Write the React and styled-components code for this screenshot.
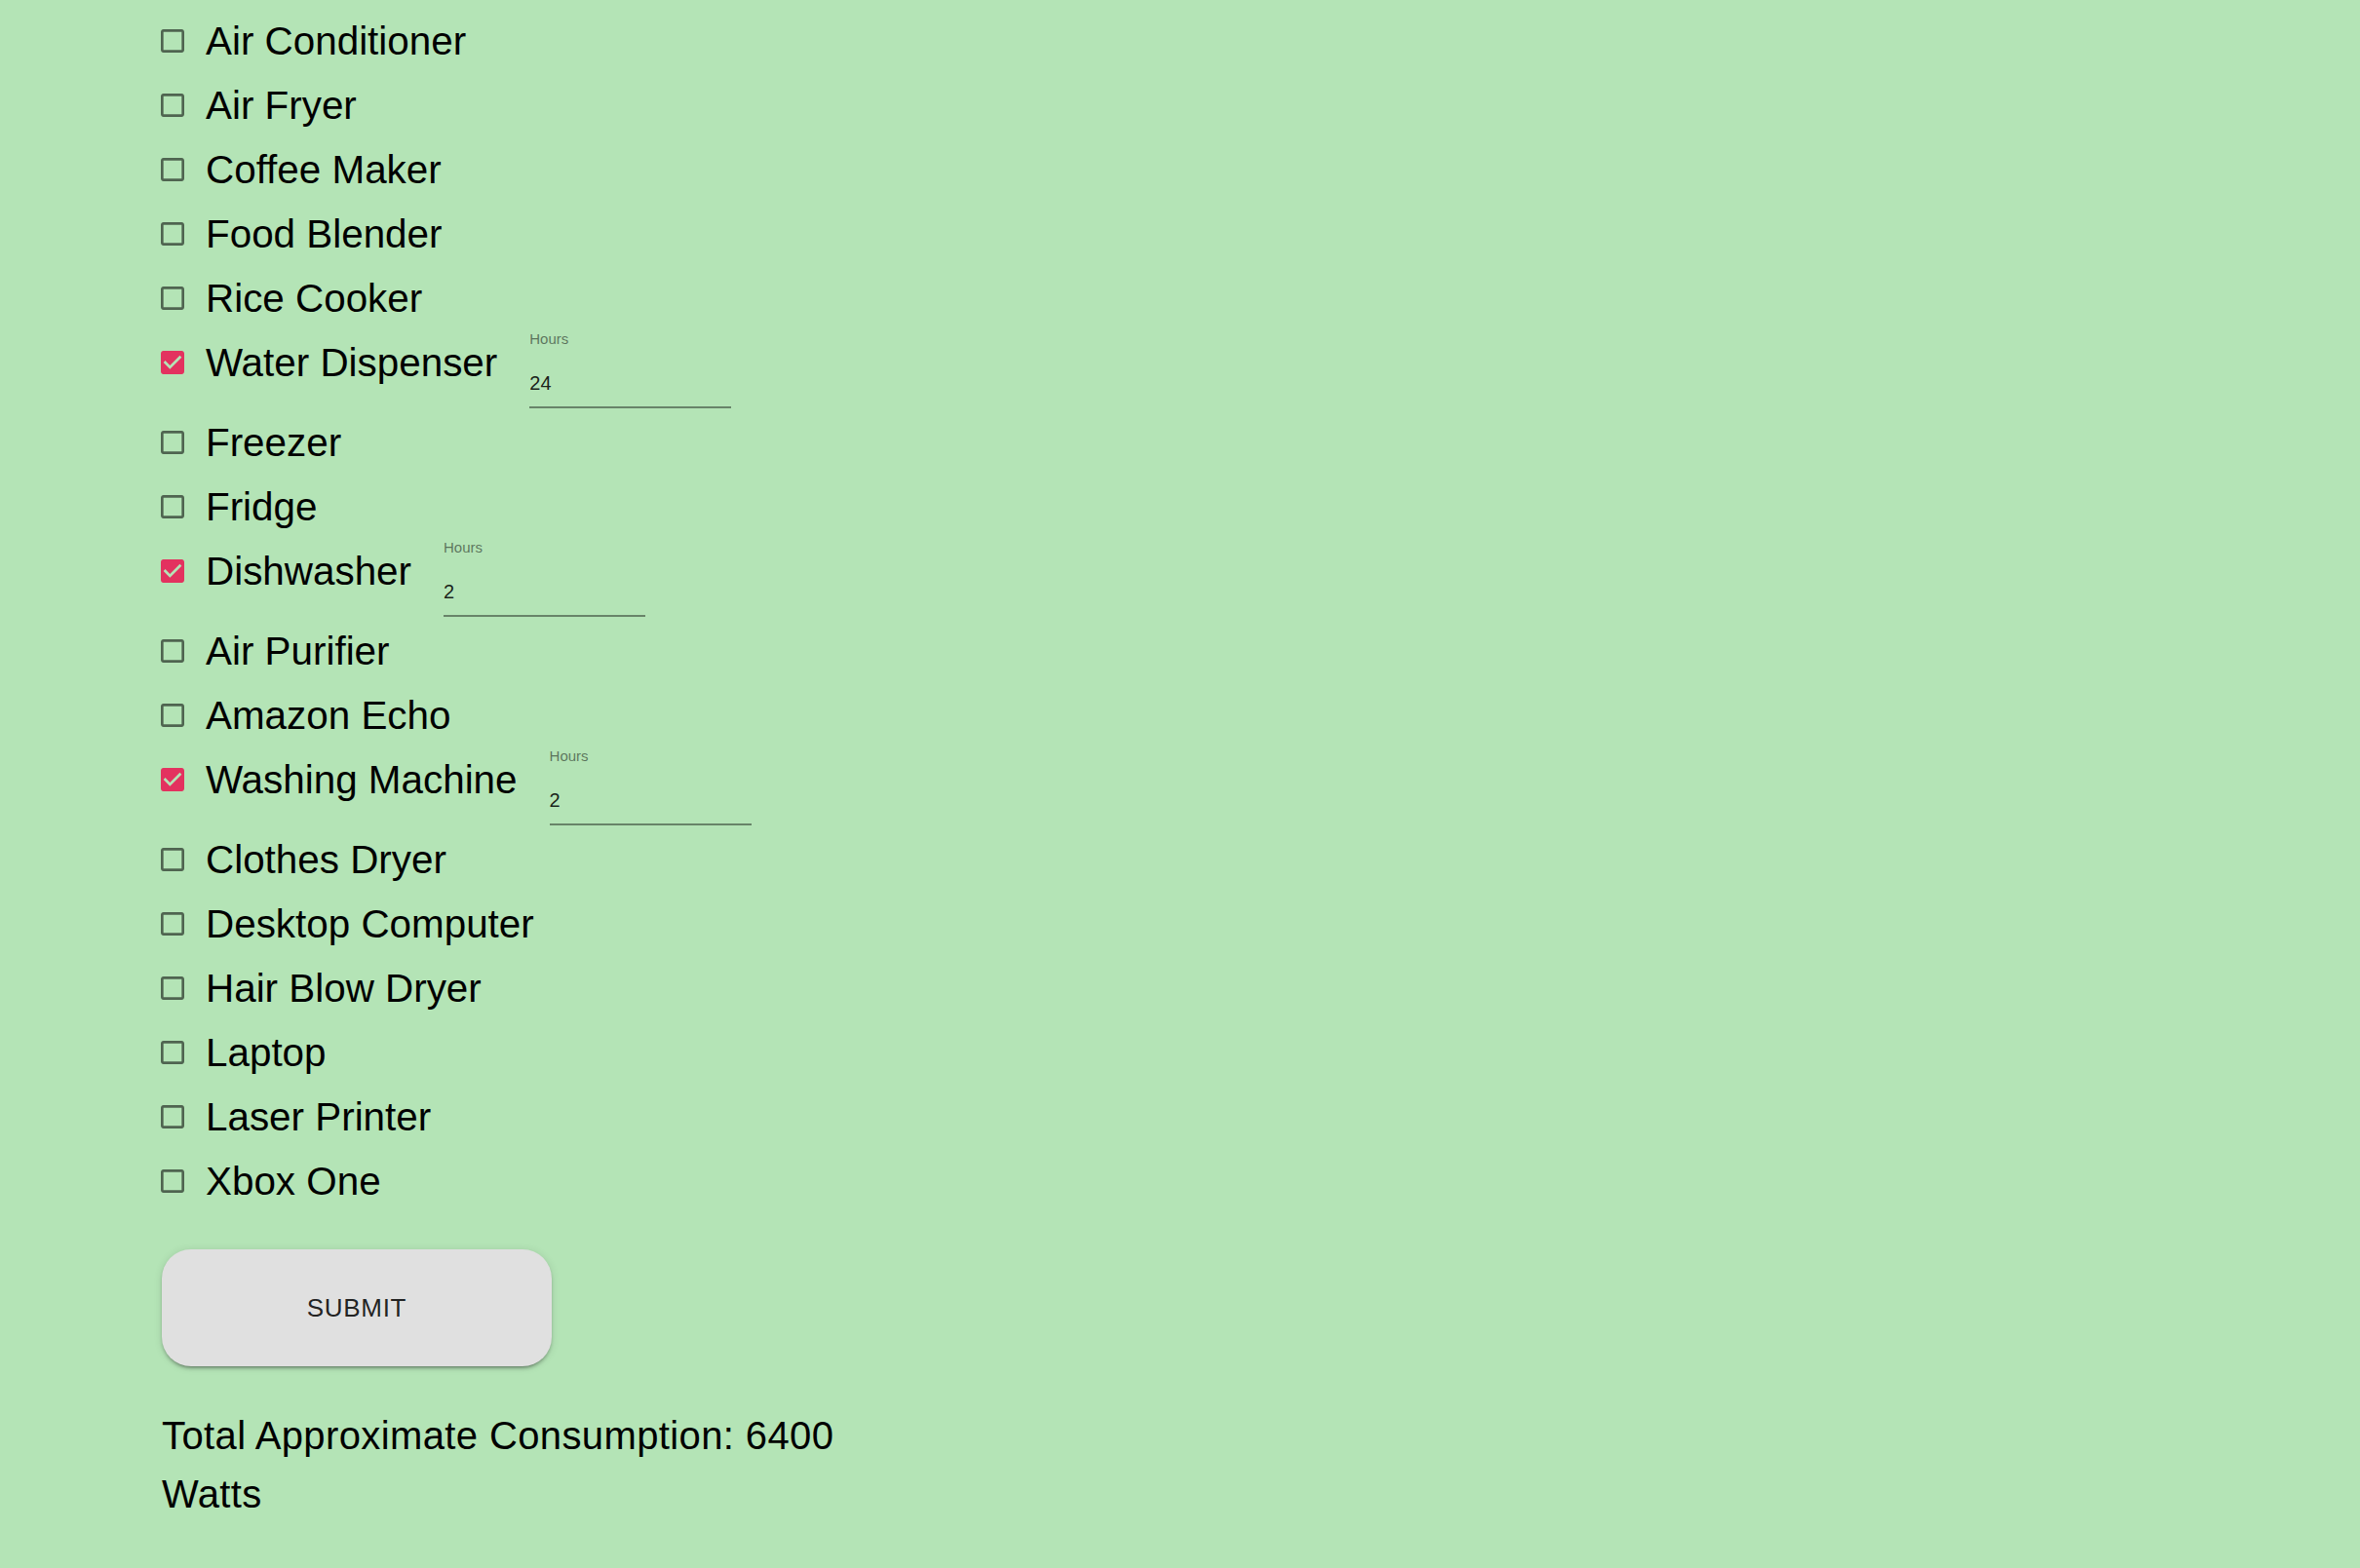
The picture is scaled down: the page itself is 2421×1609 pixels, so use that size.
import { useState } from 'react'
import styled, { createGlobalStyle } from 'styled-components'

const appliances = [
  { name: 'Air Conditioner' },
  { name: 'Air Fryer' },
  { name: 'Coffee Maker' },
  { name: 'Food Blender' },
  { name: 'Rice Cooker' },
  { name: 'Water Dispenser', checked: true, hours: '24' },
  { name: 'Freezer' },
  { name: 'Fridge' },
  { name: 'Dishwasher', checked: true, hours: '2' },
  { name: 'Air Purifier' },
  { name: 'Amazon Echo' },
  { name: 'Washing Machine', checked: true, hours: '2' },
  { name: 'Clothes Dryer' },
  { name: 'Desktop Computer' },
  { name: 'Hair Blow Dryer' },
  { name: 'Laptop' },
  { name: 'Laser Printer' },
  { name: 'Xbox One' },
]

function BoxIcon({ checked }) {
  return (
    <CheckIcon viewBox="0 0 24 24" checked={checked}>
      {checked ? (
        <path d="M19 3H5c-1.11 0-2 .9-2 2v14c0 1.1.89 2 2 2h14c1.11 0 2-.9 2-2V5c0-1.1-.89-2-2-2zm-9 14l-5-5 1.41-1.41L10 14.17l7.59-7.59L19 8l-9 9z" />
      ) : (
        <path d="M19 5v14H5V5h14m0-2H5c-1.1 0-2 .9-2 2v14c0 1.1.9 2 2 2h14c1.1 0 2-.9 2-2V5c0-1.1-.9-2-2-2z" />
      )}
    </CheckIcon>
  )
}

export default function App() {
  const [items] = useState(appliances)

  return (
    <>
      <GlobalStyle />
      <Page>
        <List>
          {items.map(item => (
            <Row key={item.name}>
              <Label>
                <BoxIcon checked={item.checked} />
                <Name>{item.name}</Name>
              </Label>
              {item.checked && (
                <Field>
                  <FieldLabel>Hours</FieldLabel>
                  <Input defaultValue={item.hours} />
                </Field>
              )}
            </Row>
          ))}
        </List>
        <SubmitButton>Submit</SubmitButton>
        <Total>Total Approximate Consumption: 6400 Watts</Total>
      </Page>
    </>
  )
}

const GlobalStyle = createGlobalStyle`
  html, body {
    margin: 0;
    background: #b4e4b6;
    font-family: "Liberation Sans", Arial, sans-serif;
  }
`

const Page = styled.main`
  min-height: 100vh;
  box-sizing: border-box;
  padding: 9px 0 0 166px;
`

const List = styled.div`
  display: flex;
  flex-direction: column;
`

const Row = styled.div`
  display: flex;
  align-items: flex-start;
`

const Label = styled.label`
  display: flex;
  align-items: center;
  height: 66px;
`

const CheckIcon = styled.svg`
  width: 32px;
  height: 32px;
  margin-left: -5px;
  fill: ${props => (props.checked ? '#e3325f' : 'rgba(0, 0, 0, 0.56)')};
`

const Name = styled.span`
  margin-left: 18px;
  font-size: 40.4px;
  color: #000;
  white-space: nowrap;
`

const Field = styled.div`
  display: flex;
  flex-direction: column;
  width: 207px;
  height: 82px;
  margin-left: 33px;
`

const FieldLabel = styled.span`
  font-size: 15px;
  line-height: 17px;
  color: rgba(0, 0, 0, 0.5);
`

const Input = styled.input`
  margin-top: 26px;
  padding: 0 0 13px;
  border: none;
  border-bottom: 2px solid rgba(0, 0, 0, 0.42);
  background: transparent;
  font-family: inherit;
  font-size: 20px;
  line-height: 24px;
  height: 37px;
  box-sizing: border-box;
  color: rgba(0, 0, 0, 0.87);
  outline: none;
`

const SubmitButton = styled.button`
  display: flex;
  align-items: center;
  justify-content: center;
  width: 400px;
  height: 120px;
  margin-top: 37px;
  border: none;
  border-radius: 30px;
  background: #e0e0e0;
  color: rgba(0, 0, 0, 0.87);
  font-family: inherit;
  font-size: 26px;
  letter-spacing: 0.7px;
  text-transform: uppercase;
  box-shadow: 0 4px 2px -3px rgba(0, 0, 0, 0.25), 0 3px 3px 0 rgba(0, 0, 0, 0.16),
    0 1px 8px 0 rgba(0, 0, 0, 0.12);
  cursor: pointer;
`

const Total = styled.p`
  width: 740px;
  margin: 41px 0 0;
  font-size: 40px;
  letter-spacing: 0.38px;
  line-height: 60px;
  color: #000;
`
